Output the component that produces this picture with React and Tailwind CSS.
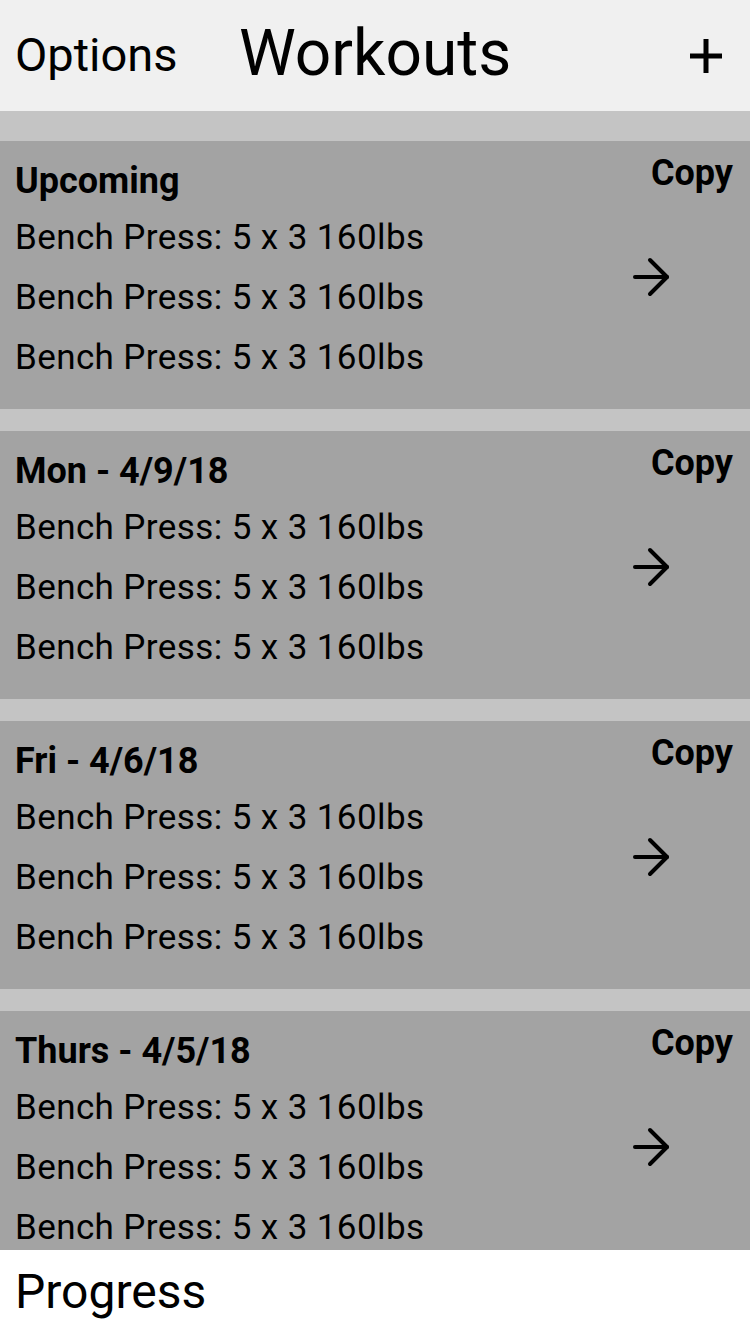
// Workouts list screen

const workouts = [
  { title: 'Upcoming', exercises: ['Bench Press: 5 x 3 160lbs', 'Bench Press: 5 x 3 160lbs', 'Bench Press: 5 x 3 160lbs'] },
  { title: 'Mon - 4/9/18', exercises: ['Bench Press: 5 x 3 160lbs', 'Bench Press: 5 x 3 160lbs', 'Bench Press: 5 x 3 160lbs'] },
  { title: 'Fri - 4/6/18', exercises: ['Bench Press: 5 x 3 160lbs', 'Bench Press: 5 x 3 160lbs', 'Bench Press: 5 x 3 160lbs'] },
  { title: 'Thurs - 4/5/18', exercises: ['Bench Press: 5 x 3 160lbs', 'Bench Press: 5 x 3 160lbs', 'Bench Press: 5 x 3 160lbs'] },
];

function PlusIcon() {
  return (
    <svg width="32" height="34" viewBox="0 0 32 34" fill="none">
      <rect x="0" y="14.5" width="32" height="5" fill="#000" />
      <rect x="13.5" y="0" width="5" height="34" fill="#000" />
    </svg>
  );
}

function ArrowIcon() {
  return (
    <svg width="40" height="40" viewBox="0 0 40 40" fill="none" stroke="#000" strokeWidth="4" strokeLinecap="round" strokeLinejoin="round">
      <path d="M5 20H37" />
      <path d="M20 3L37 20L20 37" />
    </svg>
  );
}

function WorkoutCard({ workout }) {
  return (
    <div className="flex h-[268px] shrink-0 bg-[#a3a3a3] pl-[15px] pr-[17px]">
      <div className="flex-1 pt-[14px]">
        <div className="text-[36px] font-bold leading-[53px]">{workout.title}</div>
        {workout.exercises.map((ex, i) => (
          <div key={i} className="text-[35px] leading-[60px] tracking-[0.4px] whitespace-nowrap">{ex}</div>
        ))}
      </div>
      <div className="flex flex-col items-end pt-[12px]">
        <div className="text-[36px] font-bold leading-[40px]">Copy</div>
        <div className="mt-[64px] mr-[63px]">
          <ArrowIcon />
        </div>
      </div>
    </div>
  );
}

export default function App() {
  return (
    <div className="flex h-[1334px] w-[750px] flex-col overflow-hidden bg-white text-black" style={{ fontFamily: 'Roboto, "Noto Sans", sans-serif' }}>
      {/* Header */}
      <div className="flex h-[111px] shrink-0 items-center bg-[#f0f0f0] pl-[15px] pr-[28px]">
        <div className="w-[224px] text-[47px]">Options</div>
        <div className="mb-[4px] text-[64px]">Workouts</div>
        <div className="ml-auto">
          <PlusIcon />
        </div>
      </div>

      {/* List */}
      <div className="flex flex-1 flex-col gap-[22px] overflow-hidden bg-[#c4c4c4] pt-[30px]">
        {workouts.map((w, i) => (
          <WorkoutCard key={i} workout={w} />
        ))}
      </div>

      {/* Bottom tab */}
      <div className="flex h-[84px] shrink-0 items-center bg-white pl-[15px]">
        <div className="text-[48px]">Progress</div>
      </div>
    </div>
  );
}
